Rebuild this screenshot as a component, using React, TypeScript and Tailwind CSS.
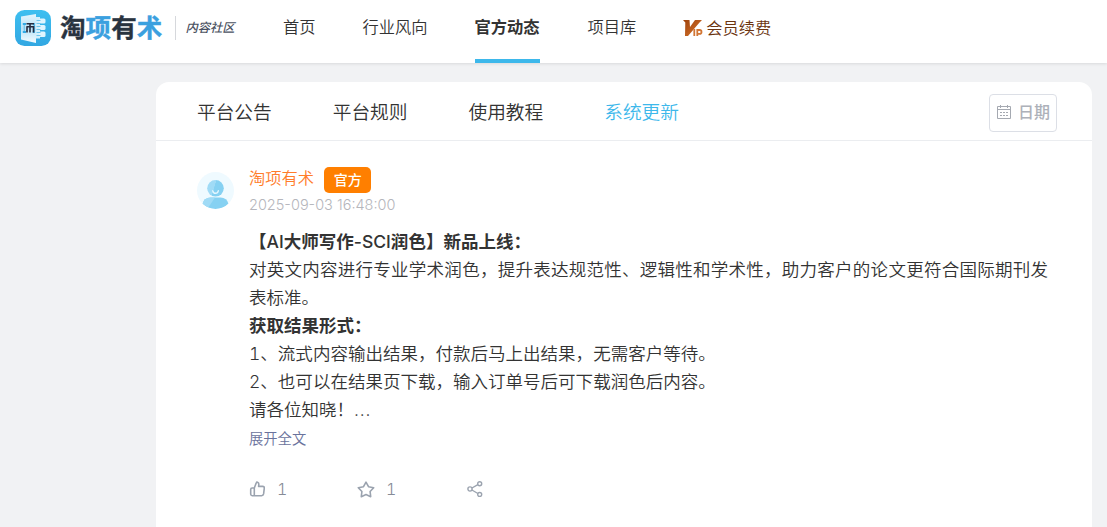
import React from "react";

const CJK = "font-['Inter','Noto_Sans_CJK_SC',sans-serif]";

function LogoMark() {
  return (
    <svg width="36" height="36" viewBox="0 0 36 36" className="block shrink-0">
      <defs>
        <linearGradient id="mark" x1="0" y1="0" x2="0" y2="1">
          <stop offset="0" stopColor="#3dbff0" />
          <stop offset="1" stopColor="#32a7e2" />
        </linearGradient>
        <linearGradient id="door" x1="0" y1="0" x2="0" y2="1">
          <stop offset="0" stopColor="#e2f5fd" />
          <stop offset="0.5" stopColor="#b9e2f7" />
          <stop offset="1" stopColor="#f4fbff" />
        </linearGradient>
      </defs>
      <rect width="36" height="36" rx="9.5" fill="url(#mark)" />
      <path d="M21 7h4v21.500h-4z" fill="#d3effc" />
      <rect x="24" y="8.500" width="6.500" height="5" rx="1.500" fill="#e0f5fe" />
      <rect x="24" y="15" width="6.500" height="5" rx="1.500" fill="#e0f5fe" />
      <rect x="24" y="21.500" width="6.500" height="5.500" rx="1.500" fill="#e0f5fe" />
      <path d="M21.500 10.500h4M21.500 13.500h4M21.500 16.500h4M21.500 19.500h4M21.500 22.500h4M21.500 25.500h4" stroke="#6cc5ee" strokeWidth="1" />
      <path d="M6 6.500 21 4v29L6 29.500z" fill="url(#door)" />
      <path d="M7.800 13h3.200v2h-1.500v6H11v2H7.800v-2h1v-6h-1zM19.800 13h-2v2h.8v6h-.8v2h2z" fill="#35aae5" />
      <path d="M11.500 13.800h7.500M15 13.500v9M12 16.500v6M11.500 16.800h7v5.700" fill="none" stroke="#262c40" strokeWidth="1.600" />
    </svg>
  );
}

function VipMark() {
  return (
    <svg width="20" height="18" viewBox="0 0 20 18" className="block shrink-0">
      <defs>
        <linearGradient id="vip" x1="0" y1="0" x2="1" y2="1">
          <stop offset="0" stopColor="#9e420b" />
          <stop offset="1" stopColor="#d9762d" />
        </linearGradient>
      </defs>
      <path d="M0 0h6.500L7 7 12 0h7l-2.500 2.500L5 16H2L2.300 2.500z" fill="url(#vip)" />
      <path d="M11.300 9v7M14.300 16v-6h2.400q1.800 0 1.800 1.900t-1.800 1.900h-2.400" fill="none" stroke="#d27634" strokeWidth="1.800" />
    </svg>
  );
}

function Avatar() {
  return (
    <svg width="37" height="37" viewBox="0 0 37 37" className="block shrink-0">
      <defs>
        <clipPath id="face"><circle cx="18.500" cy="18.500" r="18.500" /></clipPath>
        <linearGradient id="head" x1="0" y1="0" x2="1" y2=".3">
          <stop offset=".5" stopColor="#a0dbf6" />
          <stop offset=".52" stopColor="#86d1f2" />
        </linearGradient>
      </defs>
      <g clipPath="url(#face)">
        <rect width="37" height="37" fill="#effaff" />
        <circle cx="18.500" cy="16.300" r="8.300" fill="url(#head)" />
        <path d="M15.800 18.800q.4 2.500 2.700 2.500t2.800-2.500" fill="none" stroke="#e5f7ff" strokeWidth="1.400" strokeLinecap="round" />
        <path d="M5.500 32q1.500-6.500 8-6.500h10q6.500 0 8 6.500-5 5-13 5t-13-5z" fill="#86d1f2" />
        <path d="M5.500 32q1.500-6.500 8-6.500h4.500L11 36z" fill="#a0dbf6" />
      </g>
    </svg>
  );
}

function CalendarIcon() {
  return (
    <svg width="14" height="14" viewBox="0 0 14 14" fill="none" stroke="#a5a9b1" className="mb-px block shrink-0">
      <path d="M.5 1.500h13v12H.5zM.5 4.500h13M3.500 0v3M10.500 0v3" />
      <path d="M3 7.500h2M6 7.500h2M9 7.500h2M3 10.500h2M6 10.500h2M9 10.500h2" />
    </svg>
  );
}

function LikeIcon() {
  return (
    <svg width="16" height="16" viewBox="0 0 16 16" fill="none" stroke="#9ba3af" strokeWidth="1.600" strokeLinejoin="round" className="block shrink-0">
      <path d="M5.300 7 7.300 1.800q.3-.9 1.200-.6 1.500.6 1.300 2.300L9.600 5.400h4q1.900 0 1.700 1.800l-.7 5.700q-.3 1.800-2 1.800H5.300zM5.300 14.700H3.200q-1.400 0-1.500-1.400V8.400q0-1.400 1.400-1.400h2.200" />
    </svg>
  );
}

function StarIcon() {
  return (
    <svg width="18" height="17" viewBox="0 0 18 17" fill="none" stroke="#9ba3af" strokeWidth="1.600" strokeLinejoin="round" className="block shrink-0">
      <path d="m9 1.200 2.500 4.500 5.200 1-3.600 3.800.6 5.200L9 13.600l-4.700 2.100.6-5.200L1.300 6.700l5.200-1z" />
    </svg>
  );
}

function ShareIcon() {
  return (
    <svg width="16" height="16" viewBox="0 0 16 16" fill="none" stroke="#9ba3af" strokeWidth="1.400" className="block shrink-0">
      <circle cx="3" cy="8" r="2.100" />
      <circle cx="12.700" cy="2.700" r="2" />
      <circle cx="12.700" cy="13.500" r="2" />
      <path d="m4.900 7 6-3.300M4.900 9l6 3.500" />
    </svg>
  );
}

const tabs = ["平台公告", "平台规则", "使用教程", "系统更新"];

export default function App() {
  return (
    <div className={`h-[527px] w-full overflow-hidden bg-[#f1f2f4] font-[350] text-[#333] ${CJK}`}>
      <header className="flex h-[63px] bg-white pl-[15px] shadow-[0_1px_3px_rgba(0,0,0,0.1)]">
        <div className="flex h-[56px] w-[268px] items-center">
          <LogoMark />
          <span className="ml-[9px] text-[25.500px] font-bold tracking-[0.1px] text-[#29333f] [-webkit-text-stroke:0.4px_currentColor]">
            淘<span className="text-[#3ba0df]">项</span>有<span className="text-[#3ba0df]">术</span>
          </span>
          <span className="ml-[13px] h-6 w-px bg-[#d6d8dc]" />
          <span className="ml-[9px] text-[12.300px] font-medium italic text-[#4b5262]">内容社区</span>
        </div>
        <nav className="flex gap-[47px] text-[16.250px] leading-[55px]">
          <span>首页</span>
          <span>行业风向</span>
          <span className="border-b-4 border-[#3db8eb] font-bold">官方动态</span>
          <span className="pl-px">项目库</span>
          <span className="flex h-[57px] items-center gap-[3px] text-[#6b3410]">
            <VipMark />
            会员续费
          </span>
        </nav>
      </header>

      <main className="mt-[19px] ml-[156px] h-[460px] w-[936px] rounded-t-[13px] bg-white">
        <div className="flex h-[59px] items-center justify-between border-b border-[#ebedf0] pr-[35px] pl-[41px]">
          <div className="flex gap-[61px] pt-[5px] text-[18.700px]">
            {tabs.map((tab, i) => (
              <span key={tab} className={i === 3 ? "text-[#3db8eb]" : ""}>{tab}</span>
            ))}
          </div>
          <button className="mt-[3px] flex h-[38px] w-[68px] items-center gap-[7px] rounded-[4px] border border-[#dcdfe6] pl-[7px] text-[16px] font-medium text-[#adb1b9]">
            <CalendarIcon />
            <span className="pb-[2px]">日期</span>
          </button>
        </div>

        <article className="flex pt-[26px] pl-[41px]">
          <div className="mt-[5px] mr-[15px]"><Avatar /></div>
          <div className="w-[799px]">
            <div className="flex h-[26px] items-center gap-[10px]">
              <span className="pb-[3px] text-[16.300px] leading-[23px] text-[#ff7d2b]">淘项有术</span>
              <span className="flex h-[26px] w-[47px] items-center justify-center rounded-[5px] bg-[#ff7f00] pb-px text-[14px] font-medium text-white">官方</span>
            </div>
            <div className="mt-[2px] text-[14.500px] leading-5 text-[#b5b6bc]">2025-09-03 16:48:00</div>
            <div className="mt-[13px] text-justify text-[17.520px] leading-[28px]">
              <p className="font-semibold">【<span className="font-medium">AI</span>大师写作<span className="font-medium">-SCI</span>润色】新品上线：</p>
              <p>对英文内容进行专业学术润色，提升表达规范性、逻辑性和学术性，助力客户的论文更符合国际期刊发表标准。</p>
              <p className="font-semibold">获取结果形式：</p>
              <p className="tabular-nums">1、流式内容输出结果，付款后马上出结果，无需客户等待。</p>
              <p className="tabular-nums">2、也可以在结果页下载，输入订单号后可下载润色后内容。</p>
              <p>请各位知晓！<span className="tracking-[0.8px]">...</span></p>
            </div>
            <div className="mt-[4px] text-[14.300px] leading-[22px] text-[#6a729c]">展开全文</div>
            <div className="mt-[29px] flex h-5 items-center text-[16px] text-[#868b96] tabular-nums">
              <span className="flex w-[108px] items-center gap-[12px]"><LikeIcon />1</span>
              <span className="flex w-[110px] items-center gap-[11px]"><StarIcon />1</span>
              <ShareIcon />
            </div>
          </div>
        </article>
      </main>
    </div>
  );
}
